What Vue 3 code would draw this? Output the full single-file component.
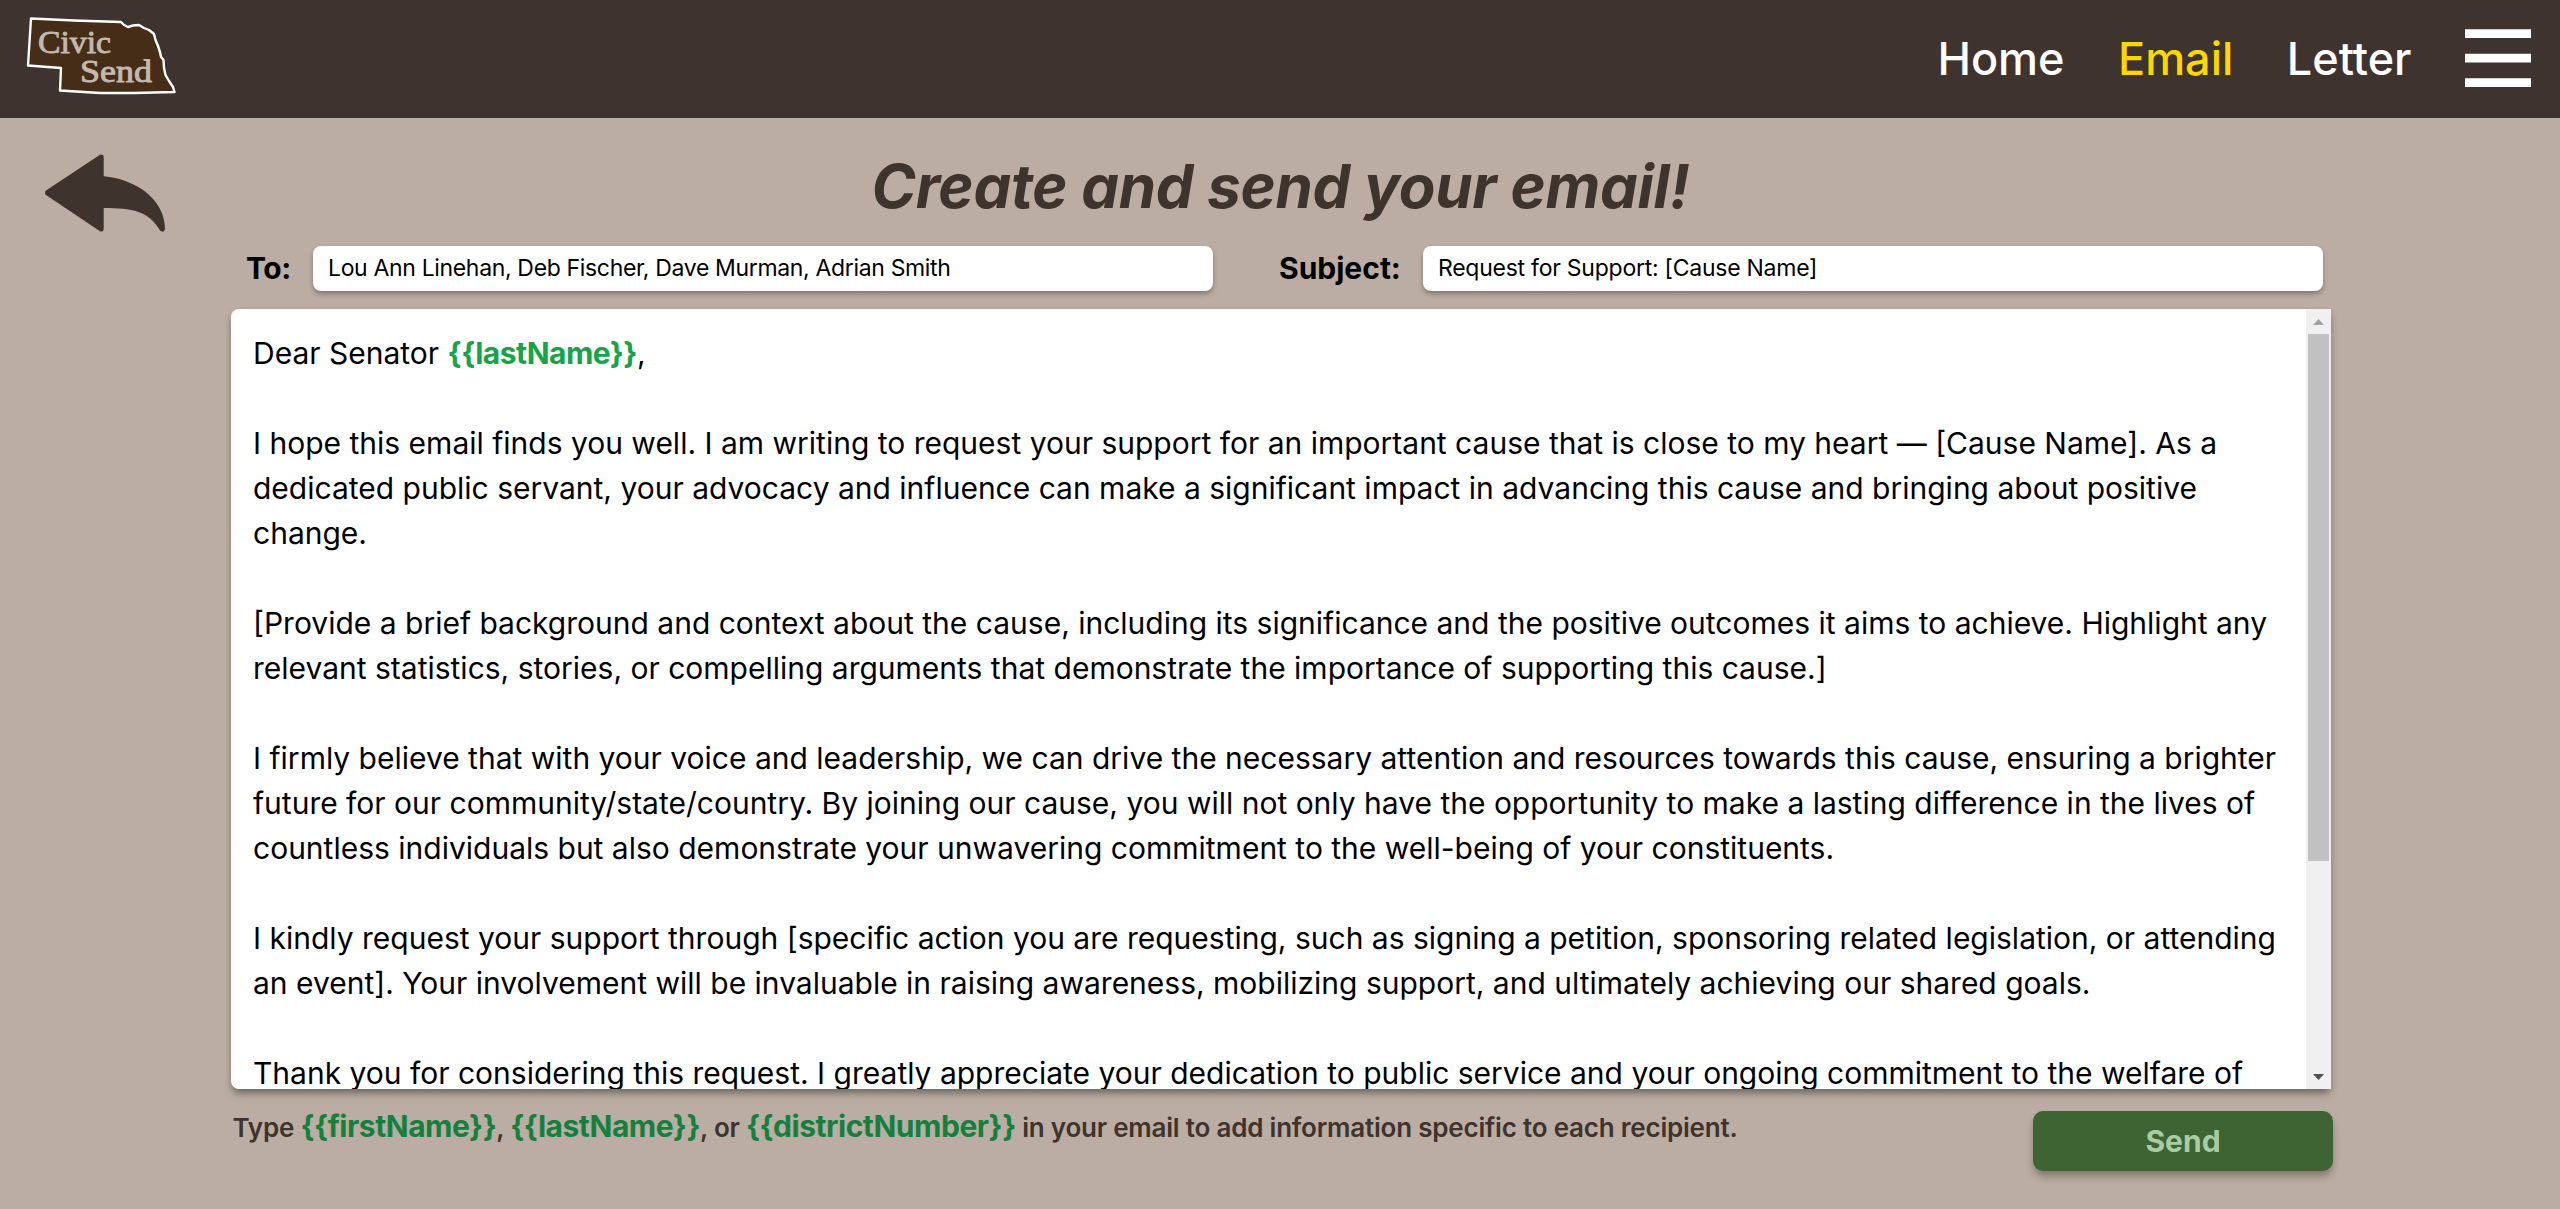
<script setup>
const links = [
  { label: 'Home', active: false },
  { label: 'Email', active: true },
  { label: 'Letter', active: false },
]

const token = (name) => `{{${name}}}`

const body = `

I hope this email finds you well. I am writing to request your support for an important cause that is close to my heart — [Cause Name]. As a
dedicated public servant, your advocacy and influence can make a significant impact in advancing this cause and bringing about positive
change.

[Provide a brief background and context about the cause, including its significance and the positive outcomes it aims to achieve. Highlight any
relevant statistics, stories, or compelling arguments that demonstrate the importance of supporting this cause.]

I firmly believe that with your voice and leadership, we can drive the necessary attention and resources towards this cause, ensuring a brighter
future for our community/state/country. By joining our cause, you will not only have the opportunity to make a lasting difference in the lives of
countless individuals but also demonstrate your unwavering commitment to the well-being of your constituents.

I kindly request your support through [specific action you are requesting, such as signing a petition, sponsoring related legislation, or attending
an event]. Your involvement will be invaluable in raising awareness, mobilizing support, and ultimately achieving our shared goals.

Thank you for considering this request. I greatly appreciate your dedication to public service and your ongoing commitment to the welfare of`
</script>

<template>
  <div class="page">
    <header class="header">
      <svg class="logo" width="154" height="84" viewBox="0 0 154 84">
        <path
          d="M7 4.500L50 6.500L97 8L100 11L104 13L109 11.500L115 11L120 14L125 16L130 20L131.500 26L134 32L136 38L137 43L139.500 46L140 54L141.500 61L145 67L149 73L150.500 78L110 79L76 79L36 76.500L37 54L4 51.500Z"
          fill="#452d17" stroke="#fff" stroke-width="2.400" stroke-linejoin="round"
        />
        <text class="logo-text" x="14" y="39" textLength="73" lengthAdjust="spacingAndGlyphs">Civic</text>
        <text class="logo-text" x="56" y="68" textLength="72" lengthAdjust="spacingAndGlyphs">Send</text>
      </svg>
      <nav class="nav">
        <a v-for="link in links" :key="link.label" class="link" :class="{ active: link.active }">{{ link.label }}</a>
        <svg class="menu" width="66" height="60" viewBox="0 0 66 60">
          <path d="M0 1.300h66v8.700H0zM0 25.700h66v8.700H0zM0 50.200h66v8.700H0z" fill="#fff" />
        </svg>
      </nav>
    </header>

    <main class="main">
      <div class="top">
        <svg class="back" width="120" height="78" viewBox="0 0 120 78">
          <path
            d="M1 36.500L55 .8Q58.700-.5 58.700 3V22.300C90 25 120 45 120 75Q119 79.500 115 76.500C104 57 87 54 58.700 54V75Q58.500 78.500 55 77.200L1 41Q-1 38.500 1 36.500Z"
            fill="#3e332d"
          />
        </svg>
        <h1 class="title">Create and send your email!</h1>
      </div>

      <div class="form">
        <div class="fields">
          <label class="label to">To:</label>
          <div class="input recipients">Lou Ann Linehan, Deb Fischer, Dave Murman, Adrian Smith</div>
          <label class="label subject">Subject:</label>
          <div class="input">Request for Support: [Cause Name]</div>
        </div>

        <div class="editor">
          <div class="text">Dear Senator <b class="token">{{ token('lastName') }}</b>,{{ body }}</div>
          <div class="scrollbar">
            <div class="arrow"><svg width="11" height="6"><path d="M5.500 0L11 6H0z" fill="#a3a3a3" /></svg></div>
            <div class="thumb"></div>
            <div class="arrow down"><svg width="11" height="6"><path d="M0 0h11L5.500 6z" fill="#505050" /></svg></div>
          </div>
        </div>

        <div class="footer">
          <p class="hint">Type <b>{{ token('firstName') }}</b>, <b>{{ token('lastName') }}</b>, or <b>{{ token('districtNumber') }}</b> in your email to add information specific to each recipient.</p>
          <button class="send">Send</button>
        </div>
      </div>
    </main>
  </div>
</template>

<style>
body {
  background: #bbada3;
}
</style>

<style scoped>
.page {
  height: 1209px;
  overflow: hidden;
  background: #bbada3;
  color: #000;
  font-family: Inter, sans-serif;
}
.header {
  box-sizing: border-box;
  height: 118px;
  padding: 0 29px 0 24px;
  background: #3e332e;
  display: flex;
  justify-content: space-between;
}
.logo {
  margin-top: 14px;
}
.logo-text {
  font-family: "Palatino Linotype", Palatino, "Liberation Serif", serif;
  font-size: 32px;
  fill: #c5b8ae;
  stroke: #c5b8ae;
  stroke-width: .9px;
}
.nav {
  display: flex;
  align-items: center;
}
.link {
  color: #fff;
  font-size: 45px;
  font-weight: 500;
  margin: 0 53.5px 2px 0;
}
.active {
  color: #ffd700;
}
.menu {
  margin-bottom: 2px;
}
.top {
  display: flex;
  height: 128px;
}
.back {
  margin: 36px 0 0 45px;
}
.title {
  flex: 1;
  margin: 30px 164px 0 0;
  text-align: center;
  font-size: 60px;
  line-height: 76px;
  font-weight: 700;
  font-style: italic;
  letter-spacing: -.3px;
  color: #3e332d;
}
.form {
  width: 2102px;
  margin-left: 231px;
}
.fields {
  display: flex;
  align-items: center;
  height: 45px;
}
.label {
  font-size: 30px;
  font-weight: 700;
  line-height: 44px;
  padding-bottom: 1px;
}
.to {
  width: 67px;
  padding-left: 15px;
  letter-spacing: -.4px;
}
.subject {
  width: 144px;
  padding-left: 66px;
}
.input {
  box-sizing: border-box;
  width: 900px;
  height: 45px;
  padding-left: 15px;
  background: #fff;
  border-radius: 8px;
  font-size: 23px;
  line-height: 44px;
  font-weight: 400;
  letter-spacing: -.25px;
  box-shadow: 0 3px 5px rgba(0, 0, 0, .3);
}
.recipients {
  letter-spacing: -.34px;
}
.editor {
  display: flex;
  width: 2100px;
  height: 780px;
  margin-top: 18px;
  background: #fff;
  border-radius: 8px 0 0 8px;
  overflow: hidden;
  box-shadow: 0 6px 9px -2px rgba(0, 0, 0, .35), 0 3px 6px rgba(0, 0, 0, .12);
}
.text {
  flex: 1;
  min-width: 0;
  overflow: hidden;
  padding: 22px 0 0 22px;
  white-space: pre;
  font-size: 30px;
  line-height: 45px;
  font-weight: 400;
}
.token {
  color: #16a34a;
  font-weight: 700;
  letter-spacing: -.5px;
}
.scrollbar {
  width: 25px;
  background: #f0f0f0;
  display: flex;
  flex-direction: column;
  align-items: center;
}
.arrow {
  width: 25px;
  height: 25px;
  display: flex;
  align-items: center;
  justify-content: center;
}
.down {
  margin-top: auto;
}
.thumb {
  width: 21px;
  height: 527px;
  background: #c1c1c1;
}
.footer {
  display: flex;
  justify-content: space-between;
}
.hint {
  margin: 16px 0 0 1.5px;
  font-size: 26px;
  line-height: 42px;
  font-weight: 600;
  letter-spacing: -.21px;
  color: #3e332d;
  white-space: nowrap;
}
.hint b {
  font-size: 30px;
  font-weight: 700;
  letter-spacing: -.46px;
  color: #15803d;
}
.send {
  width: 300px;
  height: 60px;
  margin-top: 22px;
  padding: 0;
  border: 0;
  border-radius: 10px;
  background: #3e6434;
  color: #a8cda3;
  font: 700 30px Inter, sans-serif;
  box-shadow: 0 6px 8px -1px rgba(0, 0, 0, .32);
}
</style>
